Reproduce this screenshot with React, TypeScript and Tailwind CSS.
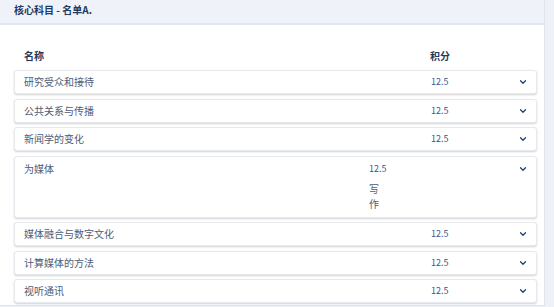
import React from 'react'
import { ChevronDown } from 'lucide-react'

const rows = [
  { name: '研究受众和接待', credit: '12.5' },
  { name: '公共关系与传播', credit: '12.5' },
  { name: '新闻学的变化', credit: '12.5' },
  { name: '为媒体', credit: '12.5', open: true, note: '写作' },
  { name: '媒体融合与数字文化', credit: '12.5' },
  { name: '计算媒体的方法', credit: '12.5' },
  { name: '视听通讯', credit: '12.5' },
]

const font = { fontFamily: '"Noto Sans CJK SC", "Noto Sans", sans-serif' }

const App = () => {
  return (
    <div className="w-[554px] h-[307px] bg-[#eef2f8] flex overflow-hidden" style={font}>
      <div className="w-[545px] h-[306px] bg-white border-r border-b border-[#dfe5ee] flex flex-col">
        <div className="h-[25px] bg-[#eff3f9] border-b-2 border-[#e1e7f0] px-[14px] pt-[3px]">
          <h1 className="text-[10px] leading-[14px] font-bold text-[#1f3b64]">核心科目 - 名单A.</h1>
        </div>

        <div className="flex px-[14px] pt-[24px] pb-[7px] text-[10px] leading-[14px] font-bold text-[#26385a]">
          <div className="pl-[10px] w-[416px]">名称</div>
          <div>积分</div>
        </div>

        <div className="flex flex-col gap-[4.5px] pl-[14px] pr-[7px]">
          {rows.map((row) => (
            <div
              key={row.name}
              className={`flex items-start bg-white rounded-[3px] border border-[#e6e9ee] shadow-[0_1px_2px_rgba(0,0,0,0.18)] pl-[9px] pr-[8px] ${row.open ? 'h-[62px] pt-[5px]' : 'h-[24px] pt-[4px]'}`}
            >
              <div className={`text-[10px] leading-[14px] text-[#4d5c77] ${row.open ? 'w-[345px]' : 'w-[407px]'}`}>{row.name}</div>
              {row.open ? (
                <div className="flex flex-col w-[143px]">
                  <span className="text-[9px] leading-[14px] text-[#34578f]">{row.credit}</span>
                  <span className="w-[12px] mt-[5px] text-[10px] leading-[15px] text-[#4d5c77]">{row.note}</span>
                </div>
              ) : (
                <div className="w-[81px] text-[9px] leading-[14px] text-[#34578f]">{row.credit}</div>
              )}
              <ChevronDown className="ml-auto w-[10px] h-[10px] mt-[2px] text-[#1f3f73]" strokeWidth={3} />
            </div>
          ))}
        </div>
      </div>
    </div>
  )
}

export default App
